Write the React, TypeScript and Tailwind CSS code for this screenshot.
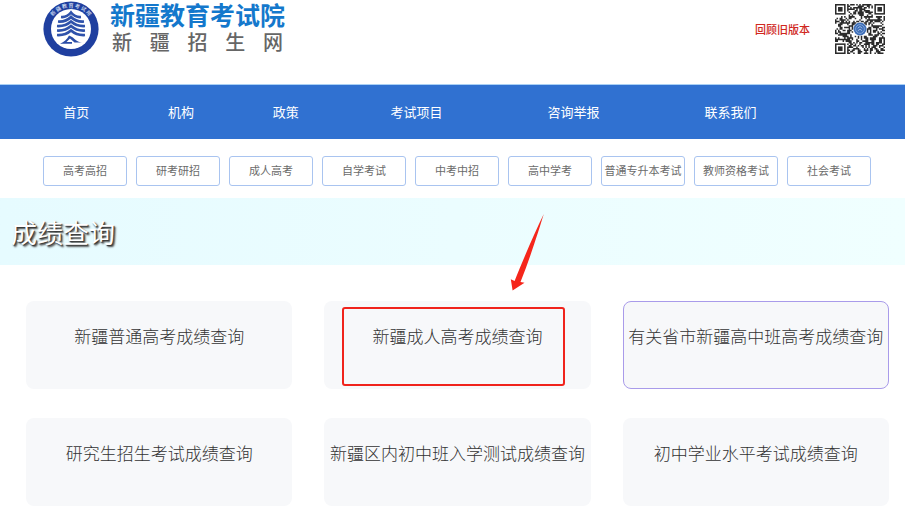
const navItems = [
  { label: "首页", wide: false },
  { label: "机构", wide: false },
  { label: "政策", wide: false },
  { label: "考试项目", wide: true },
  { label: "咨询举报", wide: true },
  { label: "联系我们", wide: true },
];

const examTypes = [
  "高考高招",
  "研考研招",
  "成人高考",
  "自学考试",
  "中考中招",
  "高中学考",
  "普通专升本考试",
  "教师资格考试",
  "社会考试",
];

const queries = [
  { title: "新疆普通高考成绩查询" },
  { title: "新疆成人高考成绩查询", marked: true },
  { title: "有关省市新疆高中班高考成绩查询", active: true },
  { title: "研究生招生考试成绩查询" },
  { title: "新疆区内初中班入学测试成绩查询" },
  { title: "初中学业水平考试成绩查询" },
];

const QR_SIZE = 33;

// Finder squares in three corners, a clear disc in the middle, noise elsewhere
function buildQrPath() {
  let seed = 207;
  let d = "";
  for (let y = 0; y < QR_SIZE; y++) {
    for (let x = 0; x < QR_SIZE; x++) {
      seed = (seed * 48271) % 2147483647;
      const nearFinder =
        (x < 8 && y < 8) || (x > QR_SIZE - 9 && y < 8) || (x < 8 && y > QR_SIZE - 9);
      const inCentre = Math.hypot(x - 16, y - 16) < 5;
      if (!nearFinder && !inCentre && seed / 2147483647 < 0.54) {
        d += `M${x} ${y}h1v1h-1z`;
      }
    }
  }
  return d;
}

const qrPath = buildQrPath();

function Emblem() {
  return (
    <svg viewBox="0 0 56 56" className="size-14 shrink-0" role="img" aria-label="新疆教育考试院">
      <defs>
        <path id="emblem-arc" d="M6 28 A22 22 0 1 1 50 28" />
      </defs>
      <circle cx="28" cy="28" r="27.6" fill="#1f3f9f" />
      <circle cx="28" cy="28" r="20" fill="#fff" />
      <text
        fill="#dfe6f7"
        fontSize="5"
        fontWeight="500"
        textAnchor="middle"
        fontFamily="'Noto Sans CJK SC', sans-serif"
      >
        <textPath href="#emblem-arc" startOffset="50%">
          新  疆  教  育  考  试  院
        </textPath>
      </text>
      <g fill="none" stroke="#2f52ab" strokeWidth="2.7">
        <path d="M18 16c4.500 .4 7.500-1.400 10-4.500 2.500 3.100 5.500 4.900 10 4.500" />
        <path d="M15 20.500c5.500 .4 10-1.400 13-4.500 3 3.100 7.500 4.900 13 4.500" />
        <path d="M14 25c6 .4 10.500-1.400 14-4.500 3.500 3.100 8 4.900 14 4.500" />
        <path d="M14 29.500c6 .4 10.500-1.400 14-4.500 3.500 3.100 8 4.900 14 4.500" />
        <path d="M14 34c6 .4 10.500-1.400 14-4.500 3.500 3.100 8 4.900 14 4.500" />
      </g>
      <path
        d="M26 34.500c3 1 5 3 7 4.700 1.500 1.300 3.500 2 6 2.300h-7.500l-4.500-4-3.500 3.500h5.500v1.700H17c4-1.800 7-4.200 9-8.200z"
        fill="#2a4ca6"
      />
    </svg>
  );
}

function QrFinder({ x, y }: { x: number; y: number }) {
  return (
    <g>
      <rect x={x + 0.5} y={y + 0.5} width="6" height="6" fill="none" stroke="#2b2b2b" />
      <rect x={x + 2} y={y + 2} width="3" height="3" fill="#2b2b2b" />
    </g>
  );
}

function QrCode() {
  return (
    <svg viewBox="0 0 33 33" className="size-[50px]" role="img" aria-label="二维码">
      <path d={qrPath} fill="#2b2b2b" />
      <QrFinder x={0} y={0} />
      <QrFinder x={26} y={0} />
      <QrFinder x={0} y={26} />
      <circle cx="16.500" cy="16.500" r="4.300" fill="#3f6fb8" />
      <circle cx="16.500" cy="16.500" r="2.900" fill="none" stroke="#8fb0de" strokeWidth="0.500" />
      <path d="M15 16l1.500-1.200 1.500 1.200M15 17.800l1.500-1.200 1.500 1.200" fill="none" stroke="#b5cbea" strokeWidth="0.500" />
    </svg>
  );
}

function Highlight() {
  return (
    <>
      <span className="absolute top-[5px] right-[25px] bottom-[2px] left-[17px] rounded-[3px] border-2 border-[#f0231c]" />
      <svg
        viewBox="0 0 36 78"
        className="absolute -top-[89px] left-[184px] h-[78px] w-9"
        aria-hidden="true"
      >
        <path
          d="M34.800 1C29.500 18 21.500 44 11.500 69L15.500 69.800 3.600 77.500 1.800 66.300 5.600 67.900C14 47 25 21 34.800 1z"
          fill="#f5261b"
        />
      </svg>
    </>
  );
}

export default function App() {
  return (
    <div className="min-h-screen bg-white font-['Noto_Sans_CJK_SC',sans-serif]">
      <header className="flex h-[84px] items-start justify-between pr-5 pl-[43px]">
        <a href="#" className="flex gap-[11px] pt-px">
          <Emblem />
          <span className="flex flex-col">
            <span className="text-[25px] leading-[26px] font-bold whitespace-nowrap text-[#1478cc]">
              新疆教育考试院
            </span>
            <span className="flex justify-between px-0.5 text-xl leading-[30px] font-medium text-[#666]">
              {["新", "疆", "招", "生", "网"].map((char) => (
                <span key={char}>{char}</span>
              ))}
            </span>
          </span>
        </a>
        <div className="flex items-center gap-[25px] pt-1">
          <a href="#" className="text-[11px] font-medium text-[#d0281e]">
            回顾旧版本
          </a>
          <QrCode />
        </div>
      </header>

      <nav className="flex h-[55px] items-center border-t border-[#a9d0f5] bg-[#3071d1] pr-24 pl-6 text-[13px] text-white">
        {navItems.map((item) => (
          <a
            key={item.label}
            href="#"
            className={item.wide ? "flex-[3] text-center" : "flex-[2] text-center"}
          >
            {item.label}
          </a>
        ))}
      </nav>

      <div className="grid grid-cols-9 gap-[9px] pt-[17px] pr-[34px] pb-3 pl-[43px]">
        {examTypes.map((type) => (
          <a
            key={type}
            href="#"
            className="flex h-[30px] items-center justify-center rounded-[3px] border border-[#a9c4f0] pb-0.5 text-[11px] whitespace-nowrap text-[#6b6b6b]"
          >
            {type}
          </a>
        ))}
      </div>

      <div className="flex h-[67px] items-center bg-linear-to-r from-[#e6fbff] to-[#f0ffff] px-[11px]">
        <h1 className="text-[26px] text-white [text-shadow:1px_1px_1px_#333,2px_2px_2px_#444]">
          成绩查询
        </h1>
      </div>

      <main className="grid grid-cols-3 gap-x-8 gap-y-[29px] pt-9 pr-4 pb-5 pl-[26px]">
        {queries.map((query) => (
          <a
            key={query.title}
            href="#"
            className={`relative flex h-[88px] justify-center rounded-lg border bg-[#f7f8fa] pt-[22px] text-[17px] leading-6 font-light whitespace-nowrap text-[#333] ${
              query.active ? "border-[#a99bea]" : "border-transparent"
            }`}
          >
            {query.title}
            {query.marked && <Highlight />}
          </a>
        ))}
      </main>
    </div>
  );
}
